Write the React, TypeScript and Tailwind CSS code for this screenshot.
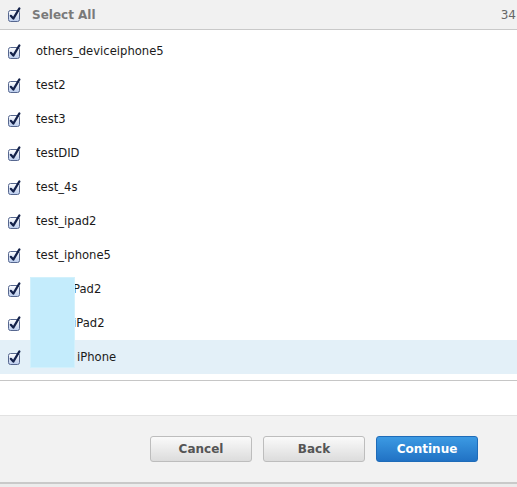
import React from "react";

const FONT = { fontFamily: '"DejaVu Sans", "Liberation Sans", sans-serif' };

type Device = { name: string; hidden?: string };

const DEVICES: Device[] = [
  { name: "others_deviceiphone5" },
  { name: "test2" },
  { name: "test3" },
  { name: "testDID" },
  { name: "test_4s" },
  { name: "test_ipad2" },
  { name: "test_iphone5" },
  { name: "Pad2", hidden: "w-[37px]" },
  { name: "iPad2", hidden: "w-[37px]" },
  { name: "iPhone", hidden: "w-[41px]" },
];

function CheckBox() {
  return (
    <svg width="16" height="17" viewBox="0 0 16 17" className="shrink-0">
      <defs>
        <linearGradient id="cbfill" x1="0" y1="0" x2="0" y2="1">
          <stop offset="0" stopColor="#ffffff" />
          <stop offset="1" stopColor="#b9cbec" />
        </linearGradient>
      </defs>
      <rect x="1.5" y="4.5" width="11" height="11" rx="2" fill="url(#cbfill)" stroke="#56678f" />
      <path d="M3.8 9.8 L6.3 12.6 L12.4 2.4" fill="none" stroke="#13214a" strokeWidth="2.2" strokeLinecap="round" strokeLinejoin="round" />
    </svg>
  );
}

function Row({ device, selected }: { device: Device; selected?: boolean }) {
  return (
    <div
      className={[
        "flex h-[34px] items-center pl-[7px]",
        selected ? "bg-[#e3f0f8]" : "",
      ].join(" ")}
    >
      <CheckBox />
      <span className="ml-[13px] mt-[2px] flex items-center text-[11.6px] text-[#1a1a1a]">
        {device.hidden ? <span className={["inline-block", device.hidden].join(" ")} /> : null}
        {device.name}
      </span>
    </div>
  );
}

export default function App() {
  return (
    <div className="relative h-[487px] w-[517px] overflow-hidden bg-white" style={FONT}>
      <div className="flex h-[30px] items-center justify-between border-b border-[#c9c9c9] bg-[#f1f1f1] pl-[7px] pr-[1px]">
        <div className="flex items-center">
          <CheckBox />
          <span className="ml-[9px] mt-[1px] text-[12px] font-bold text-[#7a7a7a]">Select All</span>
        </div>
        <span className="mt-[1px] text-[12px] text-[#666]">34</span>
      </div>

      <div className="pt-[4px]">
        {DEVICES.map((d, i) => (
          <Row key={d.name + i} device={d} selected={i === DEVICES.length - 1} />
        ))}
      </div>

      <div className="mt-[6px] h-[35px] border-t border-[#c6c6c6]" />

      <div className="flex h-[67px] items-center justify-end gap-[11px] border-t border-[#e2e2e2] bg-[#f2f2f2] pr-[39px]">
        <button
          type="button"
          className="h-[26px] w-[102px] rounded-[3px] border border-[#bdbdbd] bg-gradient-to-b from-[#fafafa] to-[#dcdcdc] text-[12px] font-bold text-[#555]"
        >
          Cancel
        </button>
        <button
          type="button"
          className="h-[26px] w-[102px] rounded-[3px] border border-[#bdbdbd] bg-gradient-to-b from-[#fafafa] to-[#dcdcdc] text-[12px] font-bold text-[#555]"
        >
          Back
        </button>
        <button
          type="button"
          className="h-[26px] w-[102px] rounded-[3px] border border-[#1f6cb9] bg-gradient-to-b from-[#3c9ae3] to-[#2172c4] text-[12px] font-bold text-white"
        >
          Continue
        </button>
      </div>
      <div className="h-[2px] bg-[#c9c9c9]" />
      <div className="h-[10px] bg-[#ececec]" />

      <div className="absolute left-[30px] top-[277px] h-[91px] w-[45px] border border-[#d2f1fc] bg-[#c4ecfc]" />
    </div>
  );
}
